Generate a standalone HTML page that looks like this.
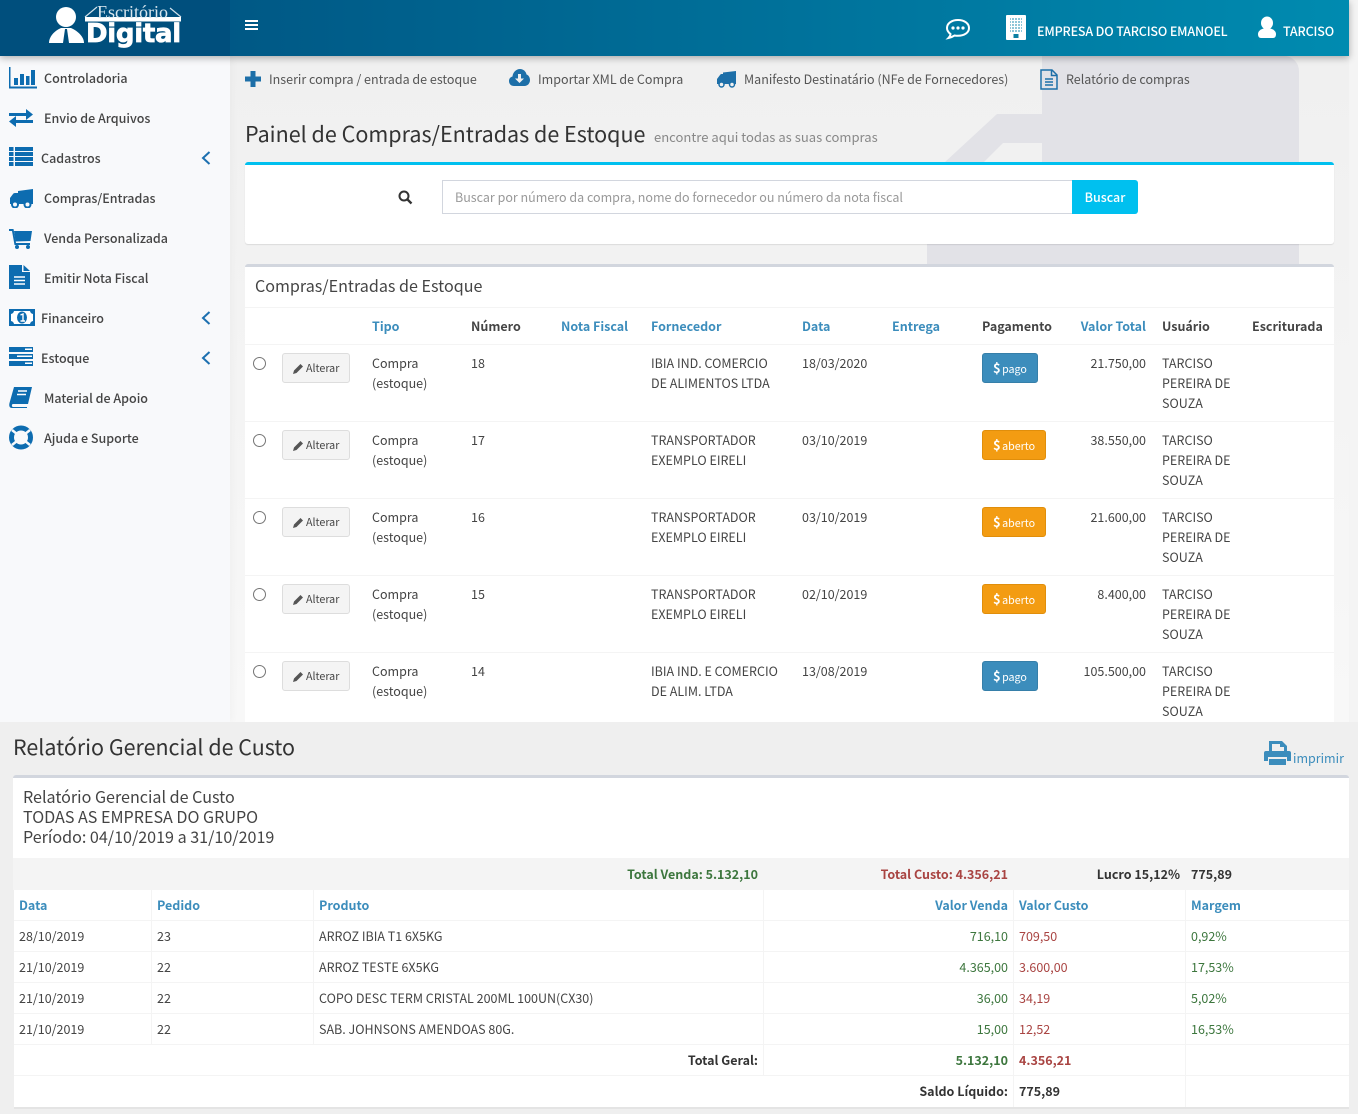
<!DOCTYPE html>
<html lang="pt-BR"><head><meta charset="utf-8"><title>Compras</title>
<style>
html,body{margin:0;padding:0;width:1358px;height:1114px;overflow:hidden;background:#f4f4f4}
body{position:relative;font-family:"Noto Sans CJK JP","Liberation Sans",sans-serif;font-size:12.5px;color:#444}
.a{position:absolute}
.t{position:absolute;white-space:nowrap;line-height:20px;height:20px}
.b{font-weight:700}
.bl{color:#3c8dbc}
.d{color:#333}
.r{text-align:right}
.s{color:#444;font-size:12.5px;font-weight:500}
.g{color:#3c763d}
.rd{color:#a94442}
svg{position:absolute;display:block}
.ln{position:absolute;background:#f4f4f4;height:1px}
.vl{position:absolute;background:#f4f4f4;width:1px}
.btn{position:absolute;box-sizing:border-box;height:30px;border-radius:3px;white-space:nowrap}
.alt{left:282px;width:68px;background:#f4f4f4;border:1px solid #ddd;color:#444;font-size:10.7px;padding-left:23px;line-height:30px}
.pay{left:982px;color:#fff;font-size:10.7px;padding-left:10px;line-height:27px;word-spacing:-1px}
.pay b{font-size:13px}
.pg{width:56px;background:#3c8dbc;border:1px solid #367fa9}
.ab{width:64px;background:#f39c12;border:1px solid #e08e0b}
input[type=radio]{position:absolute;left:253px;margin:0;width:13px;height:13px}
</style></head><body>

<!-- content bg -->
<div class="a" style="left:0;top:56px;width:1349px;height:666px;background:linear-gradient(#f0f0f0,#f8f8f8)"></div>
<!-- bg shape -->
<svg style="left:900px;top:56px" width="420" height="210"><path d="M142 0H384a15 15 0 0 1 15 15V208H27V188H142ZM45 106L97 58H142V87H103L84 106Z" fill="#e2e2e7"/></svg>

<!-- sidebar -->
<div class="a" style="left:0;top:56px;width:230px;height:666px;background:#f8f9fb;box-shadow:2px 0 8px rgba(0,0,0,.03)"></div>
<!-- header -->
<div class="a" style="left:0;top:0;width:1349px;height:56px;background:linear-gradient(90deg,#004f7d 0,#005a87 20%,#008bb0 100%);box-shadow:0 2px 7px rgba(0,0,0,.3)"></div>
<div class="a" style="left:0;top:0;width:230px;height:56px;background:#004f7d"></div>

<!-- logo -->
<svg style="left:46px;top:4px" width="44" height="42"><circle cx="20" cy="13" r="10" fill="#fff"/><path d="M3 39C3 33 8 27 15 24H25C32 27 38 33 38 39Z" fill="#fff"/><path d="M19 25L17 39H23L21 25Z" fill="#004f7d"/></svg>
<svg style="left:84px;top:5px" width="100" height="18"><path d="M1 12L13 2M86 3L97 12" stroke="#cfe0ea" stroke-width="1.2" fill="none"/><rect x="1" y="12" width="96" height="4.500" fill="#fff"/></svg>
<div class="t" style="left:97px;top:2px;font-family:'Liberation Serif',serif;font-size:18px;color:#d8e6ee">Escritório</div>
<div class="t" style="left:86px;top:19px;height:30px;line-height:30px;font-family:'DejaVu Sans',sans-serif;font-weight:700;font-size:26px;color:#fff;letter-spacing:-.3px;-webkit-text-stroke:.7px #fff">Digital</div>

<!-- hamburger -->
<div class="a" style="left:245px;top:20px;width:13px;height:2px;background:#fff"></div>
<div class="a" style="left:245px;top:24px;width:13px;height:2px;background:#fff"></div>
<div class="a" style="left:245px;top:28px;width:13px;height:2px;background:#fff"></div>

<!-- header right -->
<svg style="left:945px;top:18px" width="26" height="22"><path d="M13 2C6.500 2 2 5.500 2 10C2 12.500 3.500 14.500 5.500 16C5.500 17.500 4.500 19 3.500 20C6 19.500 8 18.500 9.500 17.500C10.500 17.700 11.800 17.800 13 17.800C19.500 17.800 24 14.500 24 10C24 5.500 19.500 2 13 2Z" fill="none" stroke="#fff" stroke-width="2"/><circle cx="8" cy="10" r="1.600" fill="#fff"/><circle cx="13" cy="10" r="1.600" fill="#fff"/><circle cx="18" cy="10" r="1.600" fill="#fff"/></svg>
<svg style="left:1006px;top:15px" width="20" height="25"><defs><pattern id="w" width="3" height="3" patternUnits="userSpaceOnUse"><rect width="2" height="2" fill="#8fc6d8"/></pattern></defs><rect width="20" height="25" fill="#fff" rx="1"/><rect x="4" y="3" width="12" height="15" fill="url(#w)"/><rect x="7.500" y="19" width="5" height="4" fill="#0a7fa3"/></svg>
<div class="t" style="left:1037px;top:21px;color:#fff;font-weight:500;letter-spacing:-.15px">EMPRESA DO TARCISO EMANOEL</div>
<svg style="left:1257px;top:16px" width="20" height="23"><ellipse cx="10" cy="7" rx="6" ry="6.500" fill="#fff"/><path d="M1 18C1 15 4 13 7 12.500H13C16 13 19 15 19 18C19 20.500 18 22 16 22H4C2 22 1 20.500 1 18Z" fill="#fff"/></svg>
<div class="t" style="left:1283px;top:21px;color:#fff;font-weight:500;letter-spacing:-.15px">TARCISO</div>

<!-- sidebar items -->
<svg style="left:9px;top:67px" width="28" height="22" fill="#0d6cb0"><path d="M0 0H1.500V19.500H28V21.500H0Z"/><rect x="5" y="11" width="4" height="7"/><rect x="11" y="7" width="4" height="11"/><rect x="17" y="9" width="3.500" height="9"/><rect x="22" y="3" width="4" height="15"/></svg>
<div class="t s" style="left:44px;top:68px">Controladoria</div>
<svg style="left:9px;top:109px" width="25" height="18" fill="#0d6cb0"><path d="M0 4H17V0L24 5.500L17 11V7H0ZM24 11H7V7L0 12.500L7 18V14H24Z"/></svg>
<div class="t s" style="left:44px;top:108px">Envio de Arquivos</div>
<svg style="left:9px;top:147px" width="24" height="19" fill="#0d6cb0"><rect width="4.500" height="4"/><rect x="6" width="18" height="4"/><rect y="5" width="4.500" height="4"/><rect x="6" y="5" width="18" height="4"/><rect y="10" width="4.500" height="4"/><rect x="6" y="10" width="18" height="4"/><rect y="15" width="4.500" height="4"/><rect x="6" y="15" width="18" height="4"/></svg>
<div class="t s" style="left:41px;top:148px">Cadastros</div>
<svg style="left:10px;top:189px" width="24" height="19" fill="#0d6cb0"><path d="M8 4V2L23 0V15H0V9L3 5Q3.500 4 5 4Z"/><circle cx="5" cy="15.500" r="3" fill="#f8f9fb" stroke="#0d6cb0" stroke-width="2"/><circle cx="17.500" cy="15.500" r="3" fill="#f8f9fb" stroke="#0d6cb0" stroke-width="2"/></svg>
<div class="t s" style="left:44px;top:188px">Compras/Entradas</div>
<svg style="left:9px;top:229px" width="24" height="20" fill="#0d6cb0"><path d="M0 0H4.500L7 14H21V16H5.500L3 2H0Z"/><path d="M5 2H23L21.500 12L6.500 12.500Z"/><circle cx="8" cy="18" r="2"/><circle cx="19" cy="18" r="2"/></svg>
<div class="t s" style="left:44px;top:228px">Venda Personalizada</div>
<svg style="left:9px;top:265px" width="21" height="25"><path d="M0 0H13V7H21V24H0Z" fill="#0d6cb0"/><path d="M14.500 0L21 6H14.500Z" fill="#0d6cb0"/><path d="M5 12H16M5 15.500H16M5 19H16" stroke="#fff" stroke-width="1.500"/></svg>
<div class="t s" style="left:44px;top:268px">Emitir Nota Fiscal</div>
<svg style="left:9px;top:309px" width="26" height="17"><rect width="26" height="17" fill="#0d6cb0"/><path d="M5 2H21Q21.500 4.500 24 5V12Q21.500 12.500 21 15H5Q4.500 12.500 2 12V5Q4.500 4.500 5 2Z" fill="#fff"/><ellipse cx="13" cy="8.500" rx="5" ry="6" fill="#0d6cb0"/><path d="M11.500 6L14 5V12M11.500 12H16" stroke="#fff" stroke-width="1.400" fill="none"/></svg>
<div class="t s" style="left:41px;top:308px">Financeiro</div>
<svg style="left:9px;top:347px" width="24" height="19"><rect width="24" height="5" fill="#0d6cb0"/><rect y="7" width="24" height="5" fill="#0d6cb0"/><rect y="14" width="24" height="5" fill="#0d6cb0"/><rect x="16" y="1.500" width="7" height="1.500" fill="#fff"/><rect x="8" y="8.500" width="15" height="1.500" fill="#fff"/><rect x="16" y="15.500" width="7" height="1.500" fill="#fff"/></svg>
<div class="t s" style="left:41px;top:348px">Estoque</div>
<svg style="left:9px;top:387px" width="23" height="21"><path d="M5 0H23L19 17H4C2.500 17 2.500 20 4 20H18V21H3C0 21 0 18 .5 16Z" fill="#0d6cb0"/><path d="M9 4H18M8 7.500H17" stroke="#fff" stroke-width="1.500"/></svg>
<div class="t s" style="left:44px;top:388px">Material de Apoio</div>
<svg style="left:9px;top:425px" width="24" height="25"><circle cx="12" cy="12.500" r="9.500" fill="none" stroke="#0d6cb0" stroke-width="5"/><path d="M3 5L8 9M21 5L16 9M3 20L8 16M21 20L16 16" stroke="#f8f9fb" stroke-width="2.500"/></svg>
<div class="t s" style="left:44px;top:428px">Ajuda e Suporte</div>
<svg style="left:201px;top:151px" width="10" height="14"><path d="M8.500 1L2 7L8.500 13" fill="none" stroke="#1d70b0" stroke-width="2"/></svg>
<svg style="left:201px;top:311px" width="10" height="14"><path d="M8.500 1L2 7L8.500 13" fill="none" stroke="#1d70b0" stroke-width="2"/></svg>
<svg style="left:201px;top:351px" width="10" height="14"><path d="M8.500 1L2 7L8.500 13" fill="none" stroke="#1d70b0" stroke-width="2"/></svg>

<!-- toolbar -->
<svg style="left:245px;top:71px" width="16" height="16"><path d="M5.500 0H10.500V5.500H16V10.500H10.500V16H5.500V10.500H0V5.500H5.500Z" fill="#1d6fa8"/></svg>
<div class="t" style="left:269px;top:69px;color:#555">Inserir compra / entrada de estoque</div>
<svg style="left:509px;top:69px" width="21" height="17"><path d="M5 17C2 17 0 15 0 12C0 9.500 1.500 8 3.500 7.500C3.800 3.500 7 0 11 0C14.500 0 17 2.500 17.500 5.500C19.500 6 21 8.500 21 11C21 14.500 18.500 17 15.500 17Z" fill="#1d6fa8"/><path d="M9 5H12V9.500H15L10.500 14L6 9.500H9Z" fill="#f0f0f0"/></svg>
<div class="t" style="left:538px;top:69px;color:#555">Importar XML de Compra</div>
<svg style="left:717px;top:71px" width="20" height="17" fill="#1d6fa8"><path d="M6 3V1.500L19 0V13H0V8L3 4Q3.500 3 4.500 3Z"/><circle cx="4.500" cy="13.500" r="2.500" fill="#f0f0f0" stroke="#1d6fa8" stroke-width="1.500"/><circle cx="15" cy="13.500" r="2.500" fill="#f0f0f0" stroke="#1d6fa8" stroke-width="1.500"/></svg>
<div class="t" style="left:744px;top:69px;color:#555">Manifesto Destinatário (NFe de Fornecedores)</div>
<svg style="left:1040px;top:69px" width="18" height="21"><path d="M1 1H12L17 6V20H1Z" fill="none" stroke="#1d6fa8" stroke-width="1.500"/><path d="M11.500 1V6.500H17" fill="none" stroke="#1d6fa8" stroke-width="1.500"/><path d="M5 10H13M5 13H13M5 16H13" stroke="#1d6fa8" stroke-width="1.500"/></svg>
<div class="t" style="left:1066px;top:69px;color:#555">Relatório de compras</div>

<!-- page title -->
<div class="t" style="left:245px;top:119px;height:30px;line-height:30px;font-size:21.5px;color:#333">Painel de Compras/Entradas de Estoque</div>
<div class="t" style="left:654px;top:127px;color:#888;font-size:13.05px">encontre aqui todas as suas compras</div>

<!-- search box -->
<div class="a" style="left:245px;top:162px;width:1089px;height:82px;background:#fff;border-top:3px solid #00c0ef;box-sizing:border-box;border-radius:3px;box-shadow:0 1px 1px rgba(0,0,0,.1)"></div>
<svg style="left:398px;top:190px" width="15" height="15"><circle cx="6" cy="6" r="4.500" fill="none" stroke="#333" stroke-width="2"/><path d="M9.500 9.500L13.500 13.500" stroke="#333" stroke-width="2.300"/></svg>
<div class="a" style="left:442px;top:180px;width:631px;height:34px;border:1px solid #d2d6de;box-sizing:border-box;background:#fff"></div>
<div class="t" style="left:455px;top:187px;color:#999">Buscar por número da compra, nome do fornecedor ou número da nota fiscal</div>
<div class="a" style="left:1072px;top:180px;width:66px;height:34px;background:#00c0ef;border-radius:0 3px 3px 0;color:#fff;text-align:center;line-height:34px;font-weight:500">Buscar</div>

<!-- list panel -->
<div class="a" style="left:245px;top:264px;width:1089px;height:458px;background:#fff;border-top:3px solid #d2d6de;box-sizing:border-box;border-radius:3px 3px 0 0"></div>
<div class="t" style="left:255px;top:275px;font-size:16.1px;color:#444">Compras/Entradas de Estoque</div>
<div class="ln" style="left:245px;top:307px;width:1089px"></div>
<div class="t b bl" style="left:372px;top:316px">Tipo</div>
<div class="t b" style="left:471px;top:316px">Número</div>
<div class="t b bl" style="left:561px;top:316px">Nota Fiscal</div>
<div class="t b bl" style="left:651px;top:316px">Fornecedor</div>
<div class="t b bl" style="left:802px;top:316px">Data</div>
<div class="t b bl" style="left:892px;top:316px">Entrega</div>
<div class="t b" style="left:982px;top:316px">Pagamento</div>
<div class="t b bl r" style="left:1046px;width:100px;top:316px">Valor Total</div>
<div class="t b" style="left:1162px;top:316px">Usuário</div>
<div class="t b" style="left:1252px;top:316px">Escriturada</div>

<div class="ln" style="left:245px;top:344px;width:1089px"></div>
<div class="ln" style="left:245px;top:421px;width:1089px"></div>
<div class="ln" style="left:245px;top:498px;width:1089px"></div>
<div class="ln" style="left:245px;top:575px;width:1089px"></div>
<div class="ln" style="left:245px;top:652px;width:1089px"></div>

<!-- row 18 -->
<input type="radio" style="top:357px">
<div class="btn alt" style="top:353px">Alterar</div>
<svg style="left:293px;top:363px" width="11" height="11"><path d="M0 11L1 7.500L7.500 1L10 3.500L3.500 10Z" fill="#555"/></svg>
<div class="t" style="left:372px;top:353px">Compra</div><div class="t" style="left:372px;top:373px">(estoque)</div>
<div class="t" style="left:471px;top:353px">18</div>
<div class="t" style="left:651px;top:353px">IBIA IND. COMERCIO</div><div class="t" style="left:651px;top:373px">DE ALIMENTOS LTDA</div>
<div class="t" style="left:802px;top:353px">18/03/2020</div>
<div class="btn pay pg" style="top:353px"><b>$</b> pago</div>
<div class="t r" style="left:1046px;width:100px;top:353px">21.750,00</div>
<div class="t" style="left:1162px;top:353px">TARCISO</div><div class="t" style="left:1162px;top:373px">PEREIRA DE</div><div class="t" style="left:1162px;top:393px">SOUZA</div>

<!-- row 17 -->
<input type="radio" style="top:434px">
<div class="btn alt" style="top:430px">Alterar</div>
<svg style="left:293px;top:440px" width="11" height="11"><path d="M0 11L1 7.500L7.500 1L10 3.500L3.500 10Z" fill="#555"/></svg>
<div class="t" style="left:372px;top:430px">Compra</div><div class="t" style="left:372px;top:450px">(estoque)</div>
<div class="t" style="left:471px;top:430px">17</div>
<div class="t" style="left:651px;top:430px">TRANSPORTADOR</div><div class="t" style="left:651px;top:450px">EXEMPLO EIRELI</div>
<div class="t" style="left:802px;top:430px">03/10/2019</div>
<div class="btn pay ab" style="top:430px"><b>$</b> aberto</div>
<div class="t r" style="left:1046px;width:100px;top:430px">38.550,00</div>
<div class="t" style="left:1162px;top:430px">TARCISO</div><div class="t" style="left:1162px;top:450px">PEREIRA DE</div><div class="t" style="left:1162px;top:470px">SOUZA</div>

<!-- row 16 -->
<input type="radio" style="top:511px">
<div class="btn alt" style="top:507px">Alterar</div>
<svg style="left:293px;top:517px" width="11" height="11"><path d="M0 11L1 7.500L7.500 1L10 3.500L3.500 10Z" fill="#555"/></svg>
<div class="t" style="left:372px;top:507px">Compra</div><div class="t" style="left:372px;top:527px">(estoque)</div>
<div class="t" style="left:471px;top:507px">16</div>
<div class="t" style="left:651px;top:507px">TRANSPORTADOR</div><div class="t" style="left:651px;top:527px">EXEMPLO EIRELI</div>
<div class="t" style="left:802px;top:507px">03/10/2019</div>
<div class="btn pay ab" style="top:507px"><b>$</b> aberto</div>
<div class="t r" style="left:1046px;width:100px;top:507px">21.600,00</div>
<div class="t" style="left:1162px;top:507px">TARCISO</div><div class="t" style="left:1162px;top:527px">PEREIRA DE</div><div class="t" style="left:1162px;top:547px">SOUZA</div>

<!-- row 15 -->
<input type="radio" style="top:588px">
<div class="btn alt" style="top:584px">Alterar</div>
<svg style="left:293px;top:594px" width="11" height="11"><path d="M0 11L1 7.500L7.500 1L10 3.500L3.500 10Z" fill="#555"/></svg>
<div class="t" style="left:372px;top:584px">Compra</div><div class="t" style="left:372px;top:604px">(estoque)</div>
<div class="t" style="left:471px;top:584px">15</div>
<div class="t" style="left:651px;top:584px">TRANSPORTADOR</div><div class="t" style="left:651px;top:604px">EXEMPLO EIRELI</div>
<div class="t" style="left:802px;top:584px">02/10/2019</div>
<div class="btn pay ab" style="top:584px"><b>$</b> aberto</div>
<div class="t r" style="left:1046px;width:100px;top:584px">8.400,00</div>
<div class="t" style="left:1162px;top:584px">TARCISO</div><div class="t" style="left:1162px;top:604px">PEREIRA DE</div><div class="t" style="left:1162px;top:624px">SOUZA</div>

<!-- row 14 -->
<input type="radio" style="top:665px">
<div class="btn alt" style="top:661px">Alterar</div>
<svg style="left:293px;top:671px" width="11" height="11"><path d="M0 11L1 7.500L7.500 1L10 3.500L3.500 10Z" fill="#555"/></svg>
<div class="t" style="left:372px;top:661px">Compra</div><div class="t" style="left:372px;top:681px">(estoque)</div>
<div class="t" style="left:471px;top:661px">14</div>
<div class="t" style="left:651px;top:661px">IBIA IND. E COMERCIO</div><div class="t" style="left:651px;top:681px">DE ALIM. LTDA</div>
<div class="t" style="left:802px;top:661px">13/08/2019</div>
<div class="btn pay pg" style="top:661px"><b>$</b> pago</div>
<div class="t r" style="left:1046px;width:100px;top:661px">105.500,00</div>
<div class="t" style="left:1162px;top:661px">TARCISO</div><div class="t" style="left:1162px;top:681px">PEREIRA DE</div><div class="t" style="left:1162px;top:701px">SOUZA</div>

<!-- bottom report -->
<div class="a" style="left:0;top:722px;width:1358px;height:392px;background:#efefef"></div>
<div class="t" style="left:13px;top:732px;height:30px;line-height:30px;font-size:21.45px;color:#333">Relatório Gerencial de Custo</div>
<svg style="left:1264px;top:741px" width="27" height="24" fill="#3c8dbc"><path d="M5 0H18L23 5V11H20V6H16V3H8V11H5Z"/><path d="M2 10H25Q27 10 27 12V20H23V16H4V20H0V12Q0 10 2 10Z"/><rect x="5" y="18" width="17" height="6"/></svg>
<div class="t bl" style="left:1293px;top:748px">imprimir</div>

<div class="a" style="left:13px;top:775px;width:1336px;height:84px;background:#fff;border-top:3px solid #d2d6de;box-sizing:border-box;border-radius:3px 3px 0 0"></div>
<div class="t" style="left:23px;top:786px;font-size:16.1px">Relatório Gerencial de Custo</div>
<div class="t" style="left:23px;top:806px;font-size:16.1px">TODAS AS EMPRESA DO GRUPO</div>
<div class="t" style="left:23px;top:826px;font-size:16.1px">Período: 04/10/2019 a 31/10/2019</div>

<div class="a" style="left:13px;top:858px;width:1336px;height:32px;background:#f4f4f4"></div>
<div class="t b g r" style="left:458px;width:300px;top:864px">Total Venda: 5.132,10</div>
<div class="t b rd r" style="left:708px;width:300px;top:864px">Total Custo: 4.356,21</div>
<div class="t b d r" style="left:980px;width:200px;top:864px">Lucro 15,12%</div>
<div class="t b d" style="left:1191px;top:864px">775,89</div>

<div class="a" style="left:14px;top:890px;width:1335px;height:217px;background:#fff;border-bottom:2px solid #e4e4e4"></div>
<div class="ln" style="left:14px;top:920px;width:1335px"></div>
<div class="ln" style="left:14px;top:951px;width:1335px"></div>
<div class="ln" style="left:14px;top:982px;width:1335px"></div>
<div class="ln" style="left:14px;top:1013px;width:1335px"></div>
<div class="ln" style="left:14px;top:1044px;width:1335px"></div>
<div class="ln" style="left:14px;top:1075px;width:1335px"></div>
<div class="vl" style="left:151px;top:890px;height:155px"></div>
<div class="vl" style="left:313px;top:890px;height:155px"></div>
<div class="vl" style="left:763px;top:890px;height:186px"></div>
<div class="vl" style="left:1013px;top:890px;height:217px"></div>
<div class="vl" style="left:1185px;top:890px;height:217px"></div>

<div class="t b bl" style="left:19px;top:895px">Data</div>
<div class="t b bl" style="left:157px;top:895px">Pedido</div>
<div class="t b bl" style="left:319px;top:895px">Produto</div>
<div class="t b bl r" style="left:808px;width:200px;top:895px">Valor Venda</div>
<div class="t b bl" style="left:1019px;top:895px">Valor Custo</div>
<div class="t b bl" style="left:1191px;top:895px">Margem</div>

<div class="t" style="left:19px;top:926px">28/10/2019</div><div class="t" style="left:157px;top:926px">23</div><div class="t" style="left:319px;top:926px">ARROZ IBIA T1 6X5KG</div><div class="t g r" style="left:808px;width:200px;top:926px">716,10</div><div class="t rd" style="left:1019px;top:926px">709,50</div><div class="t g" style="left:1191px;top:926px">0,92%</div>
<div class="t" style="left:19px;top:957px">21/10/2019</div><div class="t" style="left:157px;top:957px">22</div><div class="t" style="left:319px;top:957px">ARROZ TESTE 6X5KG</div><div class="t g r" style="left:808px;width:200px;top:957px">4.365,00</div><div class="t rd" style="left:1019px;top:957px">3.600,00</div><div class="t g" style="left:1191px;top:957px">17,53%</div>
<div class="t" style="left:19px;top:988px">21/10/2019</div><div class="t" style="left:157px;top:988px">22</div><div class="t" style="left:319px;top:988px">COPO DESC TERM CRISTAL 200ML 100UN(CX30)</div><div class="t g r" style="left:808px;width:200px;top:988px">36,00</div><div class="t rd" style="left:1019px;top:988px">34,19</div><div class="t g" style="left:1191px;top:988px">5,02%</div>
<div class="t" style="left:19px;top:1019px">21/10/2019</div><div class="t" style="left:157px;top:1019px">22</div><div class="t" style="left:319px;top:1019px">SAB. JOHNSONS AMENDOAS 80G.</div><div class="t g r" style="left:808px;width:200px;top:1019px">15,00</div><div class="t rd" style="left:1019px;top:1019px">12,52</div><div class="t g" style="left:1191px;top:1019px">16,53%</div>
<div class="t b d r" style="left:558px;width:200px;top:1050px">Total Geral:</div><div class="t b g r" style="left:808px;width:200px;top:1050px">5.132,10</div><div class="t b rd" style="left:1019px;top:1050px">4.356,21</div>
<div class="t b d r" style="left:808px;width:200px;top:1081px">Saldo Líquido:</div><div class="t b d" style="left:1019px;top:1081px">775,89</div>
</body></html>
